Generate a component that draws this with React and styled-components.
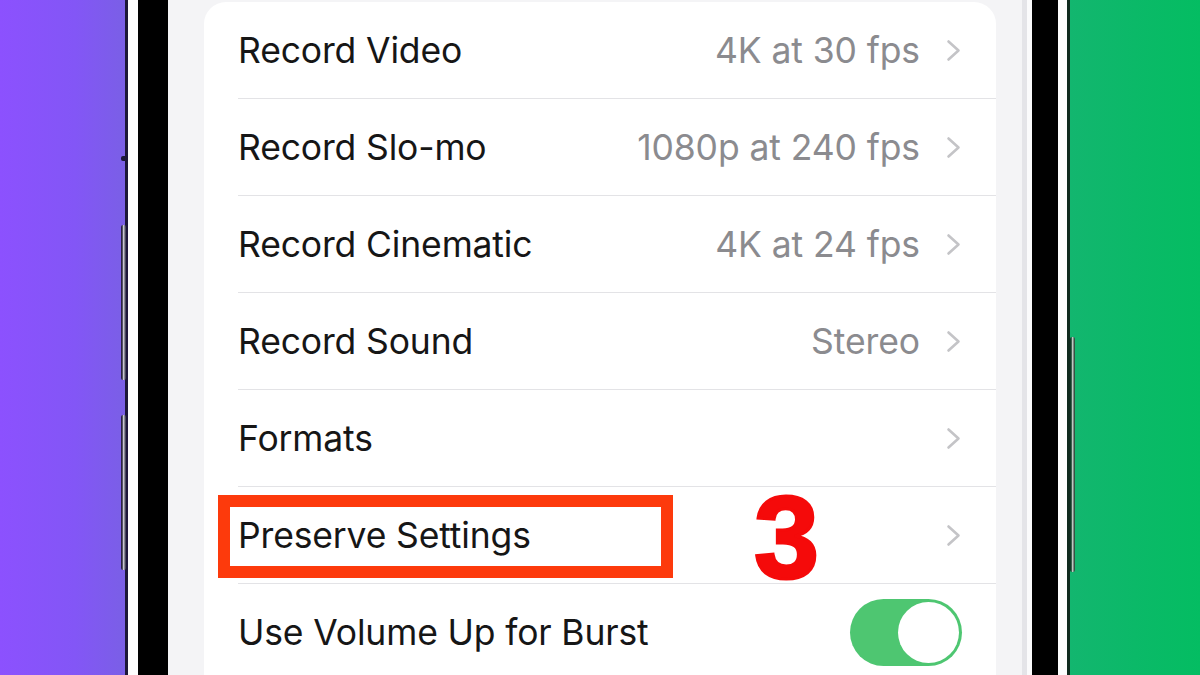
import React from 'react';
import styled, { createGlobalStyle } from 'styled-components';

const GlobalStyle = createGlobalStyle`
  html, body { margin: 0; padding: 0; }
  body { width: 1200px; height: 675px; overflow: hidden; font-family: Inter, "Noto Sans", sans-serif; }
`;

const Page = styled.div`
  display: flex;
  width: 1200px;
  height: 675px;
  overflow: hidden;
`;

const Side = styled.div`
  flex: 0 0 ${p => p.$w}px;
  background: ${p => p.$bg};
`;

const Phone = styled.div`
  position: relative;
  flex: 0 0 945px;
  display: flex;
  border-left: 3px solid #1c1738;
  border-right: 3px solid #0f2a1d;
  box-sizing: border-box;
  background: #fdfdfd;
  padding: 0 9px 0 10px;
`;

const SideButton = styled.div`
  position: absolute;
  top: ${p => p.$top}px;
  height: ${p => p.$h}px;
  width: ${p => p.$wd || 5}px;
  ${p => (p.$right ? 'right: -8px;' : 'left: -7px;')}
  border-radius: 2px;
  background: ${p => p.$bg || 'linear-gradient(90deg, #2a2540 0 25%, #d8d8de 45%, #8a8a96 70%, #2a2540 100%)'};
`;

const Bezel = styled.div`
  flex: 1;
  display: flex;
  background: #000;
  padding: 0 26px 0 30px;
`;

const Screen = styled.div`
  flex: 1;
  background: linear-gradient(to left, #fbfbfc 0 5px, #e4e4e8 5px 10px, #f4f4f6 10px);
  padding: 2px 36px 0 36px;
  overflow: hidden;
`;

const Card = styled.div`
  background: #fff;
  border-radius: 22px 22px 0 0;
  overflow: hidden;
`;

const Row = styled.div`
  position: relative;
  padding-left: 34px;
`;

const RowBody = styled.div`
  height: 97px;
  box-sizing: border-box;
  display: flex;
  align-items: center;
  border-bottom: 1px solid ${p => (p.$last ? 'transparent' : '#e3e3e6')};
  padding-right: 35px;
`;

const Label = styled.span`
  flex: 1;
  font-size: 35.5px;
  color: #161616;
  letter-spacing: -0.15px;
  white-space: nowrap;
`;

const Value = styled.span`
  font-size: 35.5px;
  color: #8b8b8f;
  letter-spacing: -0.1px;
  margin-right: 26px;
  white-space: nowrap;
`;

const Chevron = styled.svg`
  width: 15px;
  height: 23px;
  display: block;
`;

const Switch = styled.div`
  width: 112px;
  height: 67px;
  box-sizing: border-box;
  border-radius: 34px;
  background: #4ec671;
  padding: 3px;
  display: flex;
  justify-content: flex-end;
  margin-right: -1px;
`;

const Knob = styled.div`
  width: 61px;
  height: 61px;
  border-radius: 50%;
  background: #fff;
`;

const Highlight = styled.div`
  position: absolute;
  left: 14px;
  top: 8px;
  width: 455px;
  height: 83px;
  box-sizing: border-box;
  border: 12px solid #fd3a0c;
  pointer-events: none;
`;

const StepNumber = styled.div`
  position: absolute;
  left: 550px;
  top: -8px;
  font-family: "Liberation Sans", Arial, sans-serif;
  font-weight: 700;
  font-size: 117px;
  line-height: 117px;
  color: #f50a0a;
  -webkit-text-stroke: 3px #f50a0a;
`;

const rows = [
  { label: 'Record Video', value: '4K at 30 fps' },
  { label: 'Record Slo-mo', value: '1080p at 240 fps' },
  { label: 'Record Cinematic', value: '4K at 24 fps' },
  { label: 'Record Sound', value: 'Stereo' },
  { label: 'Formats' },
  { label: 'Preserve Settings', highlight: true },
  { label: 'Use Volume Up for Burst', toggle: true },
];

const ChevronIcon = () => (
  <Chevron viewBox="0 0 15 23">
    <polyline points="2.5,2.5 12.5,11.5 2.5,20.5" fill="none" stroke="#c4c4c7" strokeWidth="2.6" strokeLinecap="round" strokeLinejoin="round" />
  </Chevron>
);

export default function App() {
  return (
    <>
      <GlobalStyle />
      <Page>
        <Side $w={125} $bg="linear-gradient(90deg, #8c51fe 0%, #8356f6 60%, #7a5fe6 100%)" />
        <Phone>
          <SideButton $top={156} $h={5} $wd={7} $bg="#1c1738" />
          <SideButton $top={225} $h={155} />
          <SideButton $top={415} $h={155} />
          <SideButton $right $top={337} $h={235} $bg="linear-gradient(90deg, #0f3a26 0 25%, #cfd6d2 45%, #7c8a82 70%, #0f3a26 100%)" />
          <Bezel>
            <Screen>
              <Card>
                {rows.map((r, i) => (
                  <Row key={r.label}>
                    <RowBody $last={i === rows.length - 1}>
                      <Label>{r.label}</Label>
                      {r.value && <Value>{r.value}</Value>}
                      {r.toggle ? (
                        <Switch><Knob /></Switch>
                      ) : (
                        <ChevronIcon />
                      )}
                    </RowBody>
                    {r.highlight && (
                      <>
                        <Highlight />
                        <StepNumber>3</StepNumber>
                      </>
                    )}
                  </Row>
                ))}
              </Card>
            </Screen>
          </Bezel>
        </Phone>
        <Side $w={130} $bg="linear-gradient(90deg, #13b66f 0%, #0bb968 50%, #04bd62 100%)" />
      </Page>
    </>
  );
}
